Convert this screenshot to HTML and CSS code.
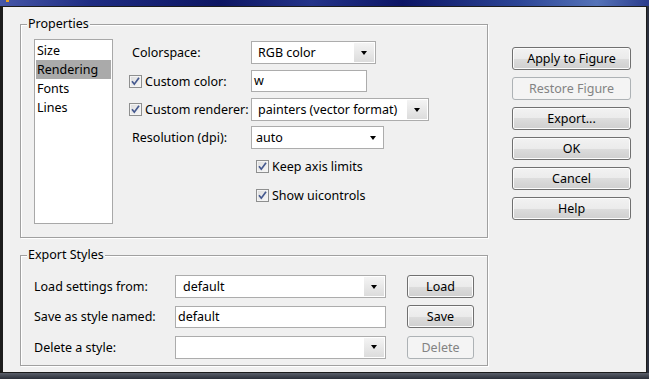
FILE: index.html
```html
<!DOCTYPE html>
<html lang="en">
<head>
    <meta charset="UTF-8">
    <title>Export Setup</title>
    <link rel="stylesheet" href="styles.css">
</head>
<body>

<div class="screen">
    <div class="titlebar"><span class="app-icon"></span></div>
    <div class="window">
        <div class="top">
            <div class="group props">
                <span class="group-title">Properties</span>
                <ul class="listbox">
                    <li>Size</li>
                    <li class="selected">Rendering</li>
                    <li>Fonts</li>
                    <li>Lines</li>
                </ul>
                <div class="form">
                    <div class="row r1">
                        <span class="label">Colorspace:</span>
                        <div class="combo aero" style="width:125px">
                            <span class="value">RGB color</span>
                            <span class="drop"><span class="arrow"></span></span>
                        </div>
                    </div>
                    <div class="row r2">
                        <span class="label check-label"><span class="check"><svg width="13" height="13" viewBox="0 0 13 13"><path d="M3 6.2 L5.3 9.2 L10 2.8" fill="none" stroke="#45598f" stroke-width="1.7"/></svg></span>Custom color:</span>
                        <div class="textbox" style="width:116px">w</div>
                    </div>
                    <div class="row r3">
                        <span class="label check-label"><span class="check"><svg width="13" height="13" viewBox="0 0 13 13"><path d="M3 6.2 L5.3 9.2 L10 2.8" fill="none" stroke="#45598f" stroke-width="1.7"/></svg></span>Custom renderer:</span>
                        <div class="combo aero" style="width:178px">
                            <span class="value">painters (vector format)</span>
                            <span class="drop"><span class="arrow"></span></span>
                        </div>
                    </div>
                    <div class="row r4">
                        <span class="label">Resolution (dpi):</span>
                        <div class="combo plain" style="width:133px">
                            <span class="value">auto</span>
                            <span class="drop"><span class="arrow"></span></span>
                        </div>
                    </div>
                    <div class="row r5 option">
                        <span class="check"><svg width="13" height="13" viewBox="0 0 13 13"><path d="M3 6.2 L5.3 9.2 L10 2.8" fill="none" stroke="#45598f" stroke-width="1.7"/></svg></span>Keep axis limits
                    </div>
                    <div class="row r6 option">
                        <span class="check"><svg width="13" height="13" viewBox="0 0 13 13"><path d="M3 6.2 L5.3 9.2 L10 2.8" fill="none" stroke="#45598f" stroke-width="1.7"/></svg></span>Show uicontrols
                    </div>
                </div>
            </div>

            <div class="actions">
                <button class="btn">Apply to Figure</button>
                <button class="btn" disabled>Restore Figure</button>
                <button class="btn">Export...</button>
                <button class="btn">OK</button>
                <button class="btn">Cancel</button>
                <button class="btn">Help</button>
            </div>
        </div>

        <div class="group export">
            <span class="group-title">Export Styles</span>
            <div class="erow e1">
                <span class="elabel">Load settings from:</span>
                <div class="combo aero wide">
                    <span class="value">default</span>
                    <span class="drop"><span class="arrow"></span></span>
                </div>
                <button class="btn small">Load</button>
            </div>
            <div class="erow e2">
                <span class="elabel">Save as style named:</span>
                <div class="textbox wide">default</div>
                <button class="btn small">Save</button>
            </div>
            <div class="erow e3">
                <span class="elabel">Delete a style:</span>
                <div class="combo aero wide">
                    <span class="value"></span>
                    <span class="drop"><span class="arrow"></span></span>
                </div>
                <button class="btn small" disabled>Delete</button>
            </div>
        </div>
    </div>
    <div class="footer"></div>
</div>

</body>
</html>
```

FILE: styles.css
```css
* {
    box-sizing: border-box;
}
body {
    margin: 0;
    font-family: 'Noto Sans', 'Liberation Sans', sans-serif;
    font-size: 12.5px;
    color: #000;
}
.screen {
    width: 649px;
    height: 379px;
    overflow: hidden;
    background: #2a2f3c;
}
.titlebar {
    height: 6px;
    background: linear-gradient(90deg, #4657a8 0%, #1e2c82 14%, #0d1663 34%, #24348a 48%, #0c1565 62%, #2c4596 80%, #5573b8 92%, #2a3b8c 100%);
}
.app-icon {
    display: block;
    width: 3px;
    height: 2px;
    margin-left: 6px;
    background: #e8a020;
}
.window {
    width: 647px;
    height: 367px;
    border-style: solid;
    border-color: #1c1c1c;
    border-width: 1px 1px 1px 3px;
    background: #f0f0f0;
    padding: 17px 0 0 17px;
}
.footer {
    height: 6px;
    background: linear-gradient(#5a5f6a, #2a2e38);
}

/* group boxes */
.group {
    position: relative;
    border: 1px solid #a0a0a0;
    box-shadow: inset 1px 1px 0 #fff, 1px 1px 0 #fff;
}
.group-title {
    position: absolute;
    top: -9px;
    left: 6px;
    padding: 0 1px;
    line-height: 16px;
    background: #f0f0f0;
}
.top {
    display: flex;
    height: 214px;
}
.props {
    display: flex;
    width: 468px;
    height: 214px;
    padding: 14px 0 0 13px;
}

/* list */
.listbox {
    width: 79px;
    height: 185px;
    margin: 0;
    padding: 1px;
    list-style: none;
    background: #fff;
    border: 1px solid #a8a8a8;
}
.listbox li {
    height: 19px;
    line-height: 19px;
    padding-left: 1px;
}
.listbox li.selected {
    background: #aaaaaa;
}

/* form */
.form {
    margin-left: 16px;
    display: flex;
    flex-direction: column;
}
.row {
    display: flex;
    align-items: center;
    height: 23px;
}
.r1 { margin-top: 2px; }
.r2 { margin-top: 6px; height: 22px; }
.r3 { margin-top: 6px; }
.r4 { margin-top: 5px; }
.r5 { margin-top: 6px; }
.r6 { margin-top: 6px; }
.label {
    width: 122px;
    padding-left: 3px;
}
.check-label {
    display: flex;
    align-items: center;
    padding-left: 0;
}
.check {
    width: 13px;
    height: 13px;
    margin-right: 3px;
    border: 1px solid #8e8f8f;
    background: linear-gradient(135deg, #dcdcdc, #f8f8f8);
    box-shadow: inset 0 0 0 1px #f4f4f4;
    display: flex;
}
.check svg {
    margin: -1px;
}
.option {
    padding-left: 127px;
}

/* inputs */
.textbox {
    height: 22px;
    line-height: 20px;
    padding-left: 2px;
    background: #fff;
    border: 1px solid #acacac;
}
.combo {
    display: flex;
    height: 23px;
    background: #fff;
    border: 1px solid #acacac;
}
.combo .value {
    flex: 1;
    line-height: 21px;
    padding-left: 5px;
    white-space: nowrap;
    overflow: hidden;
}
.combo .drop {
    width: 20px;
    display: flex;
    align-items: center;
    justify-content: center;
}
.combo.aero {
    padding: 1px;
}
.combo.aero .value {
    line-height: 19px;
}
.combo.aero .drop {
    background: linear-gradient(#f4f4f4, #dcdcdc);
}
.combo.plain .value {
    padding-left: 4px;
}
.arrow {
    width: 0;
    height: 0;
    border-left: 3.5px solid transparent;
    border-right: 3.5px solid transparent;
    border-top: 4px solid #000;
}

/* buttons */
.btn {
    display: block;
    height: 23px;
    padding: 0;
    font: inherit;
    color: #000;
    border: 1px solid #707070;
    border-radius: 3px;
    background: linear-gradient(#f2f2f2 0%, #ebebeb 50%, #dddddd 50%, #cfcfcf 100%);
    box-shadow: inset 0 0 0 1px #fcfcfc;
}
.btn:disabled {
    color: #838383;
    border-color: #adb2b5;
    background: #f4f4f4;
    box-shadow: none;
}
.actions {
    margin-left: 24px;
    padding-top: 23px;
    width: 119px;
}
.actions .btn {
    width: 119px;
    margin-bottom: 7px;
}

/* export styles */
.export {
    width: 468px;
    height: 111px;
    margin-top: 17px;
    padding: 19px 0 0 13px;
}
.erow {
    display: flex;
    align-items: center;
    height: 23px;
}
.e2 { margin-top: 7px; }
.e3 { margin-top: 8px; height: 22px; }
.elabel {
    width: 141px;
}
.wide {
    width: 211px;
}
.export .combo .value {
    padding-left: 6px;
}
.btn.small {
    width: 67px;
    margin-left: 21px;
}
```
